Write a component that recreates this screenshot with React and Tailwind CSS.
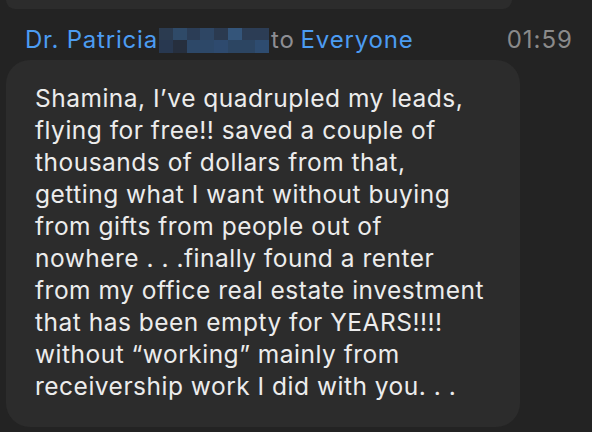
const lines = [
  'Shamina, I\u2019ve quadrupled my leads,',
  'flying for free!! saved a couple of',
  'thousands of dollars from that,',
  'getting what I want without buying',
  'from gifts from people out of',
  'nowhere . . .finally found a renter',
  'from my office real estate investment',
  'that has been empty for YEARS!!!!',
  'without \u201cworking\u201d mainly from',
  'receivership work I did with you. . .',
]

const mosaic = [
  ['#2b3b50', '#2f4a68', '#2b3d56', '#2e4664', '#2b3a50', '#34557a', '#2c3d55', '#2c3d55'],
  ['#283850', '#262f3e', '#2d4868', '#2d4868', '#2e4a6e', '#2c4562', '#2c4562', '#2e4c70'],
]

export default function App() {
  return (
    <div className="w-[592px] h-[432px] overflow-hidden bg-[#232323] font-['Inter','Liberation_Sans',sans-serif]">
      {/* previous message, cut off at the top */}
      <div className="ml-[6px] w-[506px] h-[9px] rounded-b-[24px] bg-[#2c2c2c]" />

      <div className="flex items-center h-[51px] pt-[11px] pl-[25px] pr-[19px] text-[24px] leading-none tracking-[0.8px]">
        <span className="text-[#4c9cf2]">Dr. Patricia</span>
        <span className="flex flex-col w-[110px] h-[25px] ml-[1px]">
          {mosaic.map((row, i) => (
            <span key={i} className="flex flex-1">
              {row.map((c, j) => (
                <span key={j} className="flex-1" style={{ background: c }} />
              ))}
            </span>
          ))}
        </span>
        <span className="ml-[2px] text-[#8e8e93]">to</span>
        <span className="ml-[6px] text-[#4c9cf2]">Everyone</span>
        <span className="ml-auto text-[#8a8a8a] tracking-[1px]">01:59</span>
      </div>

      <div className="ml-[6px] w-[514px] rounded-[24px] bg-[#2c2c2c] pl-[29px] pt-[22px] pb-[25px] text-[24.5px] leading-[32px] tracking-[0.5px] text-[#ececec]">
        {lines.map((l, i) => (
          <div key={i} className="whitespace-nowrap">{l}</div>
        ))}
      </div>
    </div>
  )
}
